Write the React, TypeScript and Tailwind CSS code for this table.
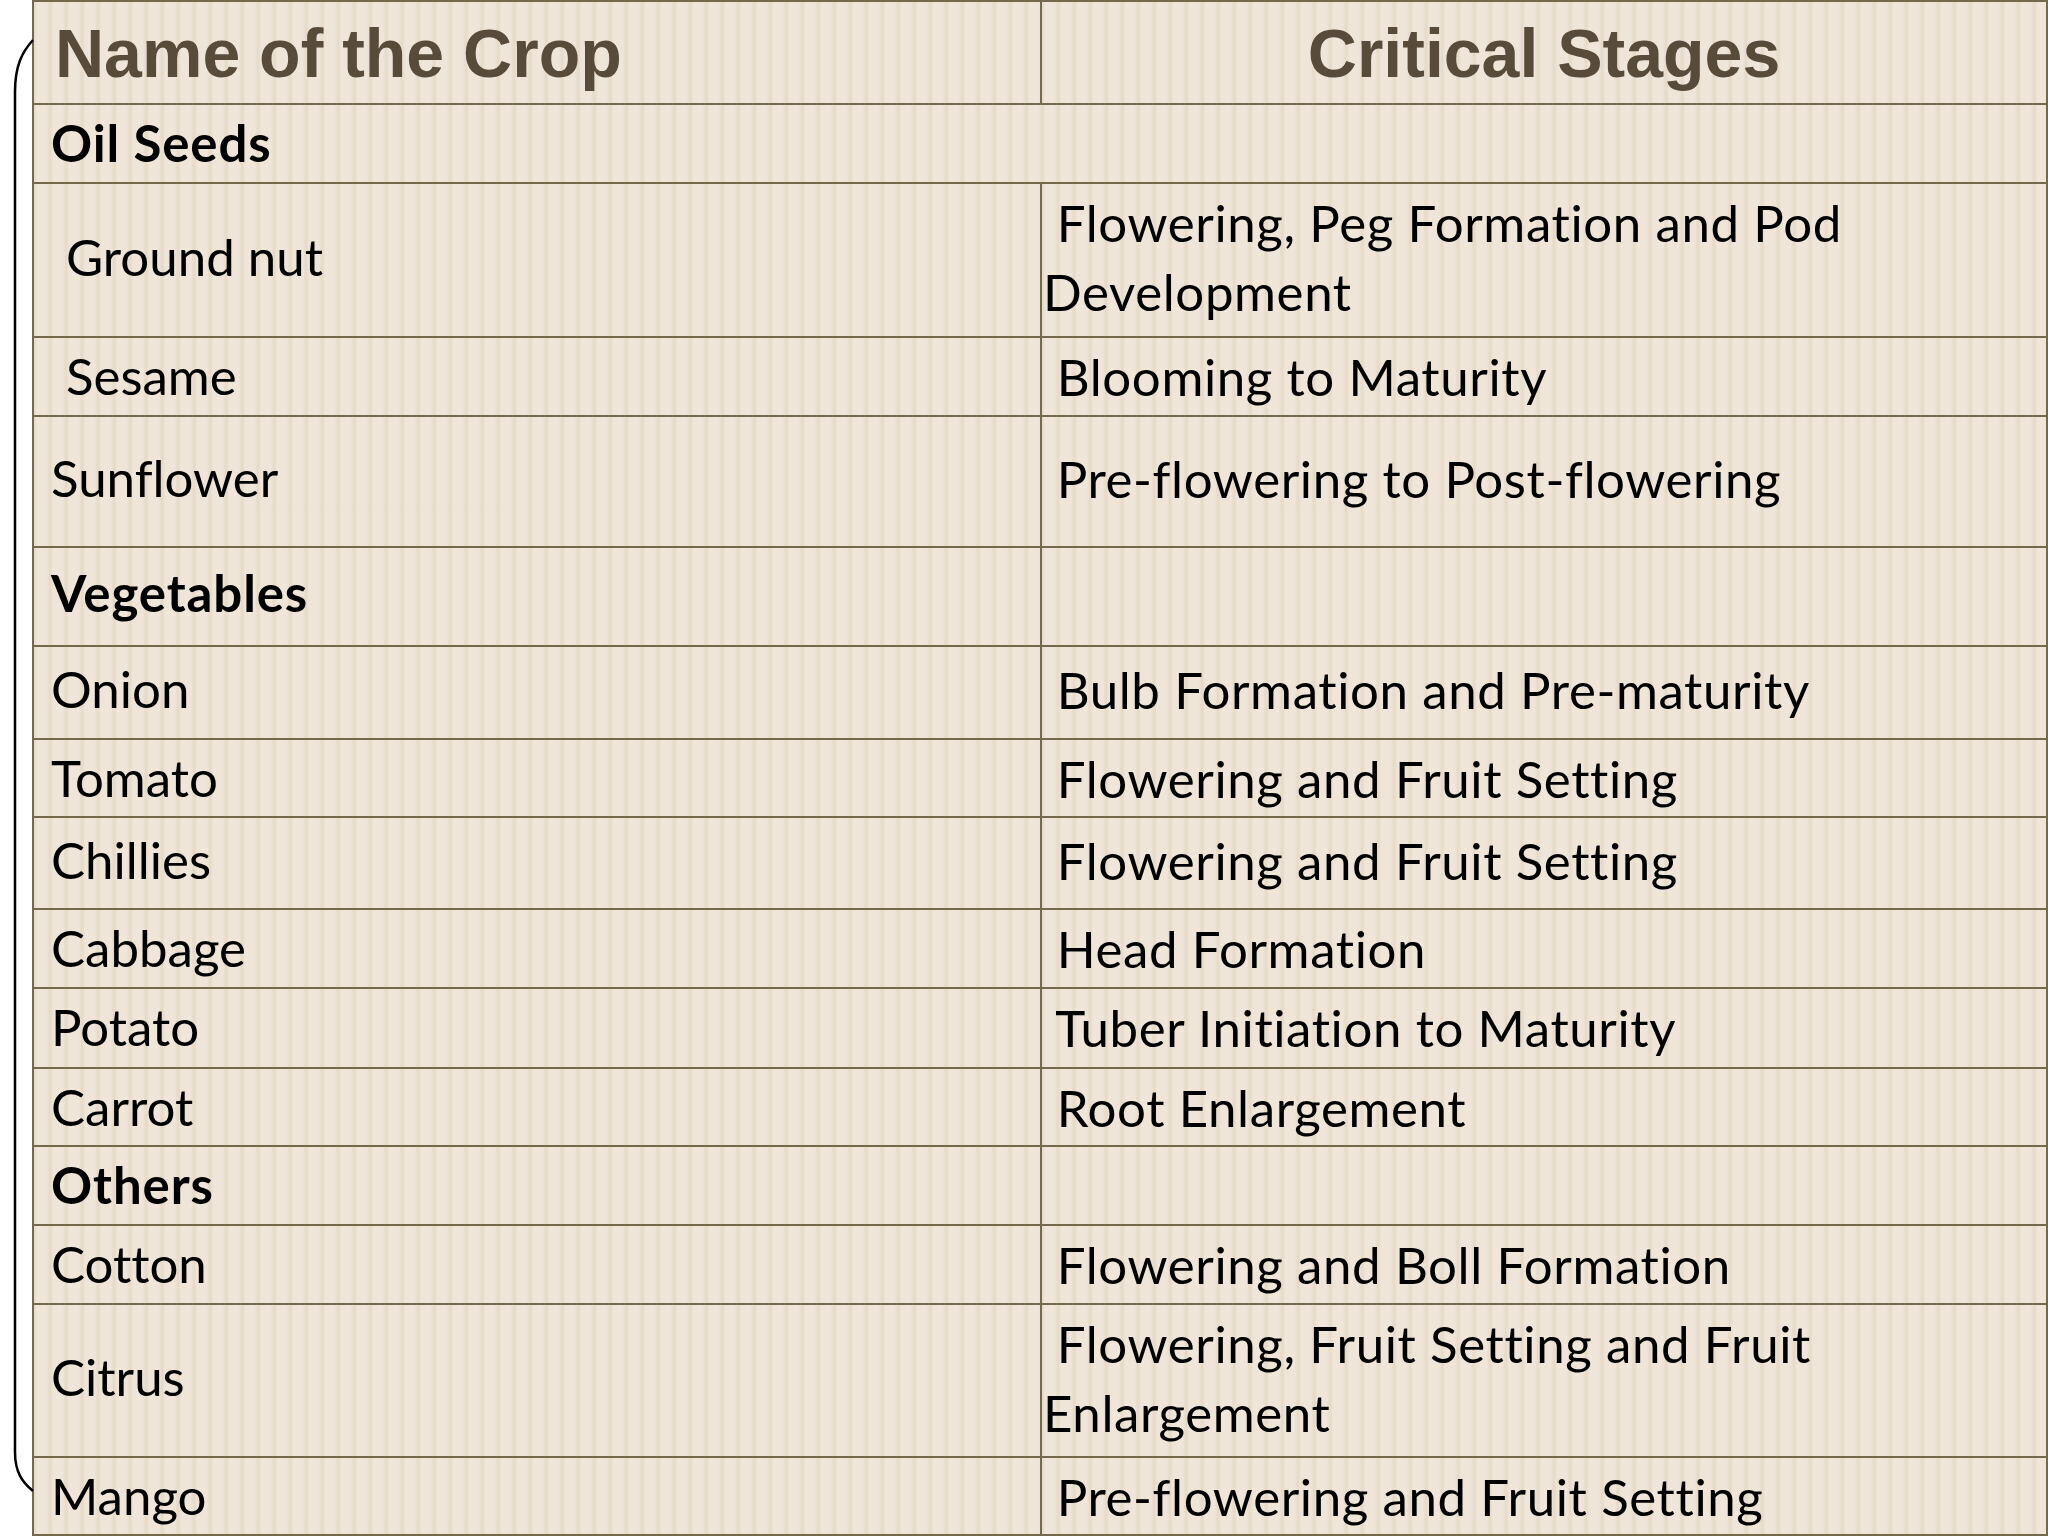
import React from 'react'

type Row = {
  crop: string
  stage?: string[]
  h: number
  group?: boolean
  span?: boolean
  indent?: boolean
}

const rows: Row[] = [
  { crop: 'Oil Seeds', h: 79, group: true, span: true },
  { crop: 'Ground nut', stage: ['Flowering, Peg Formation and Pod', 'Development'], h: 154, indent: true },
  { crop: 'Sesame', stage: ['Blooming to Maturity'], h: 79, indent: true },
  { crop: 'Sunflower', stage: ['Pre-flowering to Post-flowering'], h: 131 },
  { crop: 'Vegetables', stage: [''], h: 99, group: true },
  { crop: 'Onion', stage: ['Bulb Formation and Pre-maturity'], h: 93 },
  { crop: 'Tomato', stage: ['Flowering and Fruit Setting'], h: 78 },
  { crop: 'Chillies', stage: ['Flowering and Fruit Setting'], h: 92 },
  { crop: 'Cabbage', stage: ['Head Formation'], h: 79 },
  { crop: 'Potato', stage: ['Tuber Initiation to Maturity'], h: 80 },
  { crop: 'Carrot', stage: ['Root Enlargement'], h: 78 },
  { crop: 'Others', stage: [''], h: 79, group: true },
  { crop: 'Cotton', stage: ['Flowering and Boll Formation'], h: 79 },
  { crop: 'Citrus', stage: ['Flowering, Fruit Setting and Fruit', 'Enlargement'], h: 153 },
  { crop: 'Mango', stage: ['Pre-flowering and Fruit Setting'], h: 80 },
]

function StageCell({ lines }: { lines: string[] }) {
  return (
    <div className="flex flex-col justify-center pb-[6px] pl-[1px] leading-[69px] tracking-[0.6px]">
      {lines.map((l, i) => (
        <span key={i} className="whitespace-pre">
          {l && i === 0 ? '\u00a0' + l : l}
        </span>
      ))}
    </div>
  )
}

export default function App() {
  return (
    <div className="relative h-[1536px] w-[2048px] overflow-hidden bg-white">
      {/* bracket on the left */}
      <svg className="absolute left-0 top-0" width="40" height="1536" viewBox="0 0 40 1536">
        <path
          d="M33 40 C22 52 15 66 15 92 L15 1452 C15 1472 22 1482 33 1491"
          fill="none"
          stroke="#000"
          strokeWidth="2.5"
        />
      </svg>

      <div className="ml-[32px] w-[2016px] border-x-2 border-t-2 border-[#746a4b] bg-[repeating-linear-gradient(90deg,#e5d9c7_0px,#efe5d8_3px,#efe5d8_13px,#e5d9c7_16px)] font-['Lato',sans-serif] text-[51px] text-black [font-variant-ligatures:none]">
        <div className="grid h-[101px] grid-cols-[1008px_1fr] pb-[3px] font-['Liberation_Sans',Arial,sans-serif] text-[68px] font-bold text-[#584b3a]">
          <div className="flex items-center border-r-2 border-[#746a4b] pl-[21px]">Name of the Crop</div>
          <div className="flex items-center justify-center">Critical Stages</div>
        </div>

        {rows.map((r, i) => (
          <div
            key={r.crop}
            style={{ height: r.h }}
            className={`grid grid-cols-[1008px_1fr] border-t-2 border-[#746a4b] ${
              i === rows.length - 1 ? 'border-b-2' : ''
            }`}
          >
            <div
              className={`flex items-center pb-[6px] ${r.span ? 'col-span-2' : 'border-r-2 border-[#746a4b]'} ${
                r.indent ? 'pl-[32px]' : 'pl-[17px]'
              } ${r.group ? 'font-bold tracking-[0.9px]' : ''}`}
            >
              {r.crop}
            </div>
            {!r.span && <StageCell lines={r.stage ?? ['']} />}
          </div>
        ))}
      </div>
    </div>
  )
}
